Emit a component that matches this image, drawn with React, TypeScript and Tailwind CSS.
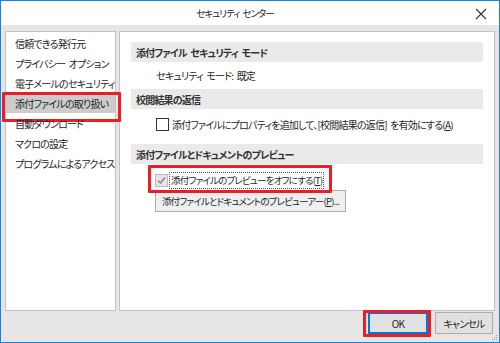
import React from 'react';

const navItems = [
  '信頼できる発行元',
  'プライバシー オプション',
  '電子メールのセキュリティ',
  '添付ファイルの取り扱い',
  '自動ダウンロード',
  'マクロの設定',
  'プログラムによるアクセス',
];

const font = "font-['Noto_Sans_CJK_JP',sans-serif] [font-feature-settings:'palt'] [word-spacing:2px]";

const SectionHeader: React.FC<{ children: React.ReactNode; className?: string }> = ({ children, className = '' }) => (
  <div className={`h-[20px] mx-[11px] bg-[#eaeaea] flex items-center pl-[5px] font-bold text-[#333] ${className}`}>
    {children}
  </div>
);

const App: React.FC = () => {
  return (
    <div className={`w-[500px] h-[343px] border border-[#1883d7] flex flex-col text-[10px] tracking-[-0.8px] text-[#262626] ${font}`}>
      {/* Title bar */}
      <div className="relative h-[24px] bg-white flex items-center justify-center pr-[30px] text-[9.5px] tracking-[-1px] text-[#222]">
        セキュリティ センター
        <svg className="absolute right-[12px] top-[7px]" width="12" height="12" viewBox="0 0 12 12">
          <path d="M1 1 L11 11 M11 1 L1 11" stroke="#333" strokeWidth="1.1" />
        </svg>
      </div>

      {/* Body */}
      <div className="relative flex-1 bg-[#e6e6e6] flex flex-col px-[4px] pt-[6px]">
        <div className="flex gap-[3px] h-[280px]">
          {/* Left nav */}
          <div className="w-[111px] shrink-0 bg-white border border-[#c3c3c3] pt-[1px]">
            {navItems.map((item, i) => (
              <div
                key={item}
                className={`relative h-[20px] flex items-center pl-[9px] whitespace-nowrap ${i === 3 ? 'bg-[#cccccc]' : ''}`}
              >
                {item}
                {i === 3 && (
                  <div className="absolute left-[-4px] right-[-6px] top-[-1px] bottom-[-9px] border-[3px] border-[#ee1c25] rounded-[1px]" />
                )}
              </div>
            ))}
          </div>

          {/* Right content */}
          <div className="w-[376px] shrink-0 min-w-0 bg-white border border-[#c3c3c3] flex flex-col">
            <SectionHeader className="mt-[10px]">添付ファイル セキュリティ モード</SectionHeader>
            <div className="h-[27px] flex items-center pl-[36px]">セキュリティ モード: 既定</div>

            <SectionHeader>校閲結果の返信</SectionHeader>
            <div className="h-[20px] mt-[5px] flex items-center pl-[36px] gap-[3px]">
              <span className="w-[13px] h-[13px] shrink-0 border border-[#333] bg-white" />
              <span className="whitespace-nowrap">
                添付ファイルにプロパティを追加して、[校閲結果の返信] を有効にする(<span className="underline">A</span>)
              </span>
            </div>

            <SectionHeader className="mt-[10px]">添付ファイルとドキュメントのプレビュー</SectionHeader>
            <div className="relative h-[18px] mt-[7px] flex items-center pl-[35px] gap-[1px]">
              <span className="w-[13px] h-[13px] shrink-0 border border-[#bcbcbc] bg-[#e6e6e6] flex items-center justify-center">
                <svg width="9" height="9" viewBox="0 0 9 9">
                  <path d="M1 4.5 L3.5 7 L8 1.5" fill="none" stroke="#8c8c8c" strokeWidth="1.6" />
                </svg>
              </span>
              <span className="border border-dotted border-[#555] px-[1px] leading-[15px] whitespace-nowrap text-[9.5px] tracking-[-0.8px]">
                添付ファイルのプレビューをオフにする(<span className="underline">T</span>)
              </span>
              <div className="absolute left-[28px] top-[-6px] w-[184px] h-[28px] border-[3px] border-[#ee1c25] rounded-[1px]" />
            </div>
            <div className="mt-[1px] ml-[35px] w-[191px] h-[22px] bg-[#efefef] border border-[#adadad] flex items-center justify-center whitespace-nowrap text-[9.5px] tracking-[-0.8px]">
              添付ファイルとドキュメントのプレビューアー(<span className="underline">P</span>)...
            </div>
          </div>
        </div>

        {/* Buttons */}
        <div className="flex justify-end gap-[7px] mt-[1px] pr-[2px]">
          <div className="relative">
            <div className="w-[60px] h-[22px] bg-[#e1e1e1] border-2 border-[#0078d7] flex items-center justify-center">
              OK
            </div>
            <div className="absolute left-[-5px] right-[-3px] top-[-2px] bottom-[-3px] border-[3px] border-[#ee1c25] rounded-[1px]" />
          </div>
          <div className="w-[58px] h-[22px] bg-[#e1e1e1] border border-[#adadad] flex items-center justify-center">
            キャンセル
          </div>
        </div>

        {/* Resize grip */}
        <svg className="absolute right-[1px] bottom-[1px]" width="7" height="7" viewBox="0 0 7 7">
          <rect x="5" y="1" width="1" height="1" fill="#a0a0a0" />
          <rect x="3" y="3" width="1" height="1" fill="#a0a0a0" />
          <rect x="5" y="3" width="1" height="1" fill="#a0a0a0" />
          <rect x="1" y="5" width="1" height="1" fill="#a0a0a0" />
          <rect x="3" y="5" width="1" height="1" fill="#a0a0a0" />
          <rect x="5" y="5" width="1" height="1" fill="#a0a0a0" />
        </svg>
      </div>
    </div>
  );
};

export default App;
